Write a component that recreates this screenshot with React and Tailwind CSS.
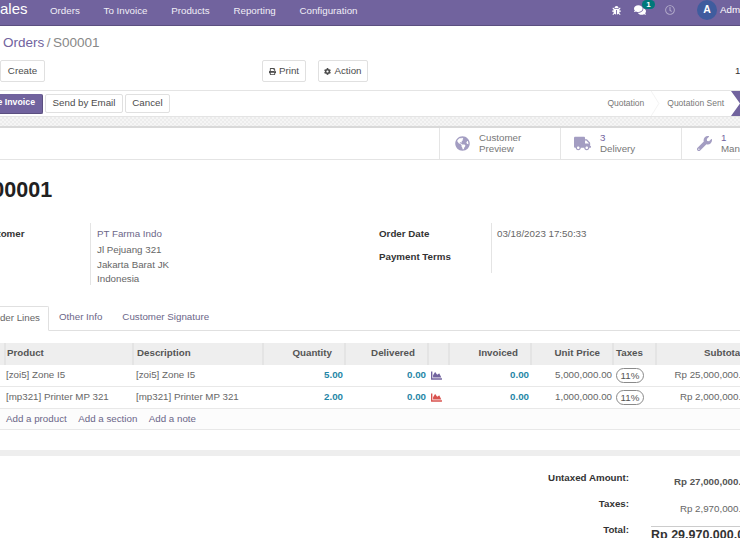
import React from "react";
import { FaBug, FaComments, FaRegClock, FaGlobeAmericas, FaTruck, FaWrench, FaPrint, FaCog, FaChartArea } from "react-icons/fa";

const cols = "grid grid-cols-[6px_128px_130px_82px_83px_21px_82px_82px_43px_120px]";

function Btn({ children, className = "" }) {
  return <button className={"flex items-center justify-center gap-[3px] rounded-[2px] border border-[#e0e0e0] bg-white text-[#4c4c4c] " + className}>{children}</button>;
}

function Stat({ icon, top, bottom }) {
  return (
    <div className="flex items-center border-l border-[#e5e5e5] h-full shrink-0 w-[121px]">
      <div className="w-[38px] flex justify-end pr-[8px] text-[#a39dc2] shrink-0">{icon}</div>
      <div className="leading-[11px] pl-[1px] -mt-[1px] whitespace-nowrap text-[#777]">
        <div className={top === "Customer" ? "" : "text-[#71639e] font-medium"}>{top}</div>
        <div>{bottom}</div>
      </div>
    </div>
  );
}

function Row({ product, qty, icon, price, sub }) {
  return (
    <div className={cols + " h-[22px] items-center border-b border-[#e8e8e8] text-[#4c4c4c] whitespace-nowrap"}>
      <div />
      <div className="text-[#666]">{product}</div>
      <div className="text-[#666] pl-[2px]">{product}</div>
      <div className="text-right font-bold text-[#1f86a6] pr-[3px]">{qty}</div>
      <div className="text-right font-bold text-[#1f86a6] pr-[3px]">0.00</div>
      <div className={"pl-[2px] " + icon}><FaChartArea size={11} /></div>
      <div className="text-right font-bold text-[#1f86a6] pr-[3px]">0.00</div>
      <div className="text-right text-[#666] pr-[2px]">{price}</div>
      <div className="pl-[2px]"><span className="block w-[28px] h-[15px] leading-[13px] text-center rounded-full border border-[#8a8a8a] text-[#555] font-medium">11%</span></div>
      <div className="text-right text-[#666] pr-[25px]">{sub}</div>
    </div>
  );
}

function Head({ children, right, pad = "" }) {
  return <div className={"h-full flex items-center border-r-2 border-[#e4e4e4] font-bold text-[#555] pb-[2px] " + (right ? "justify-end " : "") + pad}>{children}</div>;
}

export default function App() {
  return (
    <div className="w-[740px] h-[538px] overflow-hidden bg-white text-[9.75px] font-['Liberation_Sans',Arial,sans-serif] text-[#4c4c4c]">
      <nav className="h-[26px] bg-[#71639e] border-b border-[#5b4f80] flex items-center text-white">
        <span className="text-[15px] w-[60px] -ml-[10px] shrink-0 -mt-[6px]">Sales</span>
        <div className="flex items-center gap-[23.75px] -mt-[3px] font-medium text-[#f0eef6] whitespace-nowrap">
          <span>Orders</span><span>To Invoice</span><span>Products</span><span>Reporting</span><span>Configuration</span>
        </div>
        <div className="ml-auto flex items-center -mt-[5px] -mr-[30px] shrink-0">
          <FaBug size={9} className="mr-[13px]" />
          <span className="relative mr-[19px]">
            <FaComments size={12} />
            <span className="absolute -top-[4px] left-[8px] w-[13px] h-[9px] rounded-full bg-[#00787a] text-[8px] leading-[9px] text-center font-bold">1</span>
          </span>
          <FaRegClock size={10} className="text-[#b1a9c9] mr-[22px]" />
          <span className="w-[20px] h-[20px] rounded-full bg-[#3f5c9e] flex items-center justify-center font-bold text-[10.5px] mr-[3px]">A</span>
          <span className="w-[50px] whitespace-nowrap mt-[1px]">Administrator</span>
        </div>
      </nav>

      <div className="h-[65px] border-b border-[#e4e4e4]">
        <div className="pt-[9px] pl-[3px] text-[13.5px] leading-[16px] text-[#71639e] whitespace-nowrap flex">Orders<span className="text-[#888] mx-[2.5px]">/</span><span className="text-[#888]">S00001</span></div>
        <div className="flex items-center mt-[9px]">
          <Btn className="w-[45px] h-[22px]">Create</Btn>
          <Btn className="w-[44px] h-[22px] ml-[217px]"><FaPrint size={7} />Print</Btn>
          <Btn className="w-[50px] h-[22px] ml-[12px]"><FaCog size={7} />Action</Btn>
          <span className="ml-auto mr-[-1px] w-[6px] overflow-hidden text-[#333]">1</span>
        </div>
      </div>

      <div className="h-[26px] flex items-center border-b border-[#e4e4e4]">
        <button className="h-[20px] w-[43px] rounded-r-[2px] bg-[#71639e] text-white text-[8.75px] font-bold whitespace-nowrap overflow-hidden flex justify-end items-center pr-[7px] border-r border-b border-[#5b4f80]">e Invoice</button>
        <Btn className="w-[78px] h-[19px] ml-[2px]">Send by Email</Btn>
        <Btn className="w-[45px] h-[19px] ml-[2px]">Cancel</Btn>
        <div className="ml-auto flex items-center h-full -mr-[20px] text-[#777] text-[8.5px]">
          <span className="whitespace-nowrap">Quotation</span>
          <svg viewBox="0 0 9 26" className="w-[9px] h-[25px] ml-[7px] mr-[7px] text-[#f3f3f3]" fill="none" stroke="currentColor"><path d="M0 0l8 13L0 26" /></svg>
          <span className="whitespace-nowrap mr-[7px]">Quotation Sent</span>
          <div className="w-[29px] h-[25px] bg-[#71639e] [clip-path:polygon(0_0,100%_0,100%_100%,0_100%,9px_50%)]" />
        </div>
      </div>

      <div className="h-[9px] bg-[repeating-conic-gradient(#ececec_0_25%,#f5f5f5_0_50%)] bg-[length:4px_4px] border-b-2 border-[#d9d9d9] box-content" />

      <div className="h-[32px] border-b border-[#e4e4e4] flex justify-end">
        <div className="flex -mr-[62px]">
          <Stat icon={<FaGlobeAmericas size={15} />} top="Customer" bottom="Preview" />
          <Stat icon={<FaTruck size={17} />} top="3" bottom="Delivery" />
          <Stat icon={<FaWrench size={15} />} top="1" bottom="Manufacturing" />
        </div>
      </div>

      <h1 className="-ml-[22px] mt-[17px] text-[21.5px] leading-[26px] font-bold text-[#212121]">S00001</h1>

      <div className="flex mt-[20px] h-[62px]">
        <div className="w-[90px] -ml-[21px] mr-[21px] font-bold text-[#333] pt-[4px] shrink-0">Customer</div>
        <div className="w-[289px] border-l border-[#e4e4e4] pl-[6px] text-[#666] leading-[14.5px] pt-[4px] shrink-0">
          <div className="text-[#6b6688] mb-[1.5px]">PT Farma Indo</div>
          <div>Jl Pejuang 321</div>
          <div>Jakarta Barat JK</div>
          <div>Indonesia</div>
        </div>
        <div className="w-[112px] font-bold text-[#333] shrink-0 pt-[4px]">
          <div>Order Date</div>
          <div className="mt-[8px]">Payment Terms</div>
        </div>
        <div className="h-[50px] border-l border-[#e4e4e4] pl-[5px] pt-[4px] text-[#666]">03/18/2023 17:50:33</div>
      </div>

      <div className="mt-[21px] h-[25px] border-b border-[#e0e0e0] flex items-end">
        <div className="w-[50px] h-[25px] bg-white border border-[#e0e0e0] border-b-white -mb-[1px] -ml-[1px] rounded-tr-[2px] flex items-center justify-end pr-[8px] text-[#666] whitespace-nowrap overflow-hidden">Order Lines</div>
        <div className="h-[25px] flex items-center ml-[10px] text-[#6b6688]">Other Info</div>
        <div className="h-[25px] flex items-center ml-[20px] text-[#6b6688]">Customer Signature</div>
      </div>

      <div className="mt-[12px] w-[777px]">
        <div className={cols + " h-[22px] bg-[#eeeeee] items-center"}>
          <Head />
          <Head pad="pl-[1px]">Product</Head>
          <Head pad="pl-[3px]">Description</Head>
          <Head right pad="pr-[12px]">Quantity</Head>
          <Head right pad="pr-[12px]">Delivered</Head>
          <Head />
          <Head right pad="pr-[12px]">Invoiced</Head>
          <Head right pad="pr-[12px]">Unit Price</Head>
          <Head pad="pl-[2px]">Taxes</Head>
          <div className="text-right font-bold text-[#555] pr-[34px] pb-[2px]">Subtotal</div>
        </div>
        <Row product="[zoi5] Zone I5" qty="5.00" icon="text-[#71639e]" price="5,000,000.00" sub="Rp 25,000,000.00" />
        <Row product="[mp321] Printer MP 321" qty="2.00" icon="text-[#d9534f]" price="1,000,000.00" sub="Rp 2,000,000.00" />
        <div className={cols + " h-[21px] items-center border-b border-[#e8e8e8] bg-[#fcfcfc]"}>
          <div />
          <div className="col-span-3 flex gap-[11.5px] text-[#6b6688]"><span>Add a product</span><span>Add a section</span><span>Add a note</span></div>
        </div>
      </div>

      <div className="mt-[20px] h-[6px] bg-[#eeeeee]" />

      <div className="flex mt-[16px] whitespace-nowrap">
        <div className="w-[629px] text-right font-bold text-[#333] shrink-0">
          <div className="leading-[12px]">Untaxed Amount:</div>
          <div className="leading-[12px] mt-[14px]">Taxes:</div>
          <div className="leading-[12px] mt-[14px]">Total:</div>
        </div>
        <div className="ml-[22px] w-[101px] shrink-0 text-right">
          <div className="leading-[12px] mt-[4px] font-bold text-[#555]">Rp 27,000,000.00</div>
          <div className="leading-[12px] mt-[15px] text-[#666]">Rp 2,970,000.00</div>
          <div className="mt-[11px] border-t border-[#ccc] text-left text-[12.5px] leading-[16px] font-bold text-[#333]">Rp 29,970,000.00</div>
        </div>
      </div>
    </div>
  );
}
